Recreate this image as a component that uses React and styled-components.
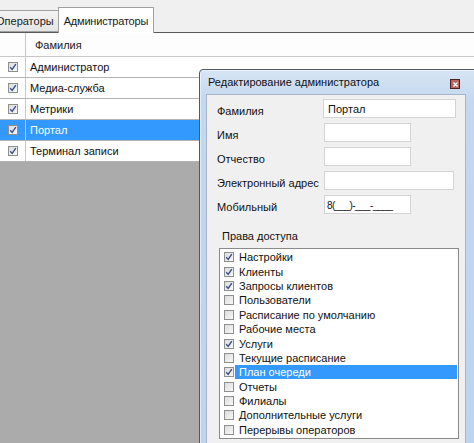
import React from 'react';
import styled, { createGlobalStyle } from 'styled-components';

const GlobalStyle = createGlobalStyle`
  html, body {
    margin: 0;
    padding: 0;
    background: #f0f0f0;
    overflow: hidden;
  }
  * { box-sizing: border-box; }
`;

const admins = [
  { name: 'Администратор' },
  { name: 'Медиа-служба' },
  { name: 'Метрики' },
  { name: 'Портал', selected: true },
  { name: 'Терминал записи' },
];

const rights = [
  { title: 'Настройки', checked: true },
  { title: 'Клиенты', checked: true },
  { title: 'Запросы клиентов', checked: true },
  { title: 'Пользователи' },
  { title: 'Расписание по умолчанию' },
  { title: 'Рабочие места' },
  { title: 'Услуги', checked: true },
  { title: 'Текущие расписание' },
  { title: 'План очереди', checked: true, selected: true },
  { title: 'Отчеты' },
  { title: 'Филиалы' },
  { title: 'Дополнительные услуги' },
  { title: 'Перерывы операторов' },
];

const fields = [
  { label: 'Фамилия', value: 'Портал', width: 134 },
  { label: 'Имя', value: '', width: 87 },
  { label: 'Отчество', value: '', width: 87 },
  { label: 'Электронный адрес', value: '', width: 130 },
  { label: 'Мобильный', value: '8(___)-___-____', width: 87, mask: true },
];

const CheckBox = ({ checked }) => (
  <Box>
    {checked && (
      <svg width="8" height="8" viewBox="0 0 8 8">
        <path d="M1.2 4.2 L3.2 6.4 L6.8 1.2" fill="none" stroke="#3b4f8a" strokeWidth="1.4" />
      </svg>
    )}
  </Box>
);

const App = () => {
  return (
    <Page>
      <GlobalStyle />
      <MainWindow>
        <TabStrip>
          <Tab>Операторы</Tab>
          <Tab active>Администраторы</Tab>
        </TabStrip>
        <Grid>
          <HeaderRow>
            <CheckCell />
            <HeaderText>Фамилия</HeaderText>
          </HeaderRow>
          {admins.map((item, index) => (
            <Row key={index} selected={item.selected}>
              <CheckCell>
                <CheckBox checked />
              </CheckCell>
              <RowText>{item.name}</RowText>
            </Row>
          ))}
          <EmptyArea />
        </Grid>
      </MainWindow>

      <Dialog>
        <TitleBar>
          <Title>Редактирование администратора</Title>
          <CloseButton>
            <svg width="5" height="5" viewBox="0 0 5 5">
              <path d="M0.5 0.5 L4.5 4.5 M4.5 0.5 L0.5 4.5" stroke="#fff" strokeWidth="1.2" />
            </svg>
          </CloseButton>
        </TitleBar>
        <Client>
          <Form>
            {fields.map((f, index) => (
              <FieldRow key={index}>
                <Label>{f.label}</Label>
                <TextInput w={f.width} mask={f.mask}>{f.value}</TextInput>
              </FieldRow>
            ))}
          </Form>
          <GroupLabel>Права доступа</GroupLabel>
          <ListBox>
            {rights.map((r, index) => (
              <ListItem key={index}>
                <CheckBox checked={r.checked} />
                <ItemText selected={r.selected}>{r.title}</ItemText>
              </ListItem>
            ))}
          </ListBox>
        </Client>
      </Dialog>
    </Page>
  );
};

const Page = styled.div`
  position: relative;
  width: 474px;
  height: 443px;
  overflow: hidden;
  font-family: "Liberation Sans", Arial, sans-serif;
  font-size: 11px;
  color: #000;
`;

const MainWindow = styled.div`
  display: flex;
  flex-direction: column;
  height: 100%;
`;

const TabStrip = styled.div`
  display: flex;
  align-items: flex-end;
  height: 33px;
  margin-left: -9px;
  background: #f0f0f0;
  border-bottom: 1px solid #5a5a5a;
`;

const Tab = styled.div`
  height: ${p => (p.active ? '26px' : '22px')};
  margin-bottom: ${p => (p.active ? '-1px' : '0')};
  padding: 0 ${p => (p.active ? '5px' : '4px')};
  display: flex;
  align-items: center;
  background: ${p => (p.active ? '#ffffff' : 'linear-gradient(#f4f4f4, #e4e4e4)')};
  border: 1px solid #a0a0a0;
  border-bottom: ${p => (p.active ? 'none' : '1px solid #a0a0a0')};
  margin-right: ${p => (p.active ? '0' : '-1px')};
  position: relative;
  z-index: ${p => (p.active ? 1 : 0)};
  color: #1a1a1a;
  letter-spacing: ${p => (p.active ? '-0.2px' : '0')};
`;

const Grid = styled.div`
  flex: 1;
  display: flex;
  flex-direction: column;
  background: #fff;
`;

const HeaderRow = styled.div`
  display: flex;
  height: 24px;
  background: #fdfdfd;
  border-bottom: 1px solid #c8c8c8;
`;

const CheckCell = styled.div`
  width: 26px;
  flex-shrink: 0;
  display: flex;
  align-items: center;
  justify-content: center;
  border-right: 1px solid #c8c8c8;
`;

const HeaderText = styled.div`
  display: flex;
  align-items: center;
  padding-left: 9px;
  color: #222;
`;

const Row = styled.div`
  display: flex;
  height: 21px;
  background: ${p => (p.selected ? '#3399ff' : '#fff')};
  color: ${p => (p.selected ? '#fff' : '#111')};
  border-bottom: 1px solid #b4b4b4;
`;

const RowText = styled.div`
  display: flex;
  align-items: center;
  padding-left: 4px;
`;

const EmptyArea = styled.div`
  flex: 1;
  background: #ababab;
`;

const Box = styled.div`
  width: 10px;
  height: 10px;
  flex-shrink: 0;
  border: 1px solid #8e8f8f;
  background: linear-gradient(135deg, #dcdcdc, #f8f8f8);
  display: flex;
  align-items: center;
  justify-content: center;
`;

const Dialog = styled.div`
  position: absolute;
  left: 199px;
  top: 69px;
  width: 282px;
  height: 400px;
  display: flex;
  flex-direction: column;
  background: linear-gradient(#d7e5f5, #c4d8ee 30px, #bcd4ef);
  border: 1px solid #4f5a66;
  border-radius: 4px 4px 0 0;
  padding: 0 14px 0 6px;
  box-shadow: 0 0 0 1px rgba(255, 255, 255, 0.5) inset;
`;

const TitleBar = styled.div`
  height: 24px;
  display: flex;
  align-items: center;
  justify-content: space-between;
  padding: 0 6px 0 2px;
`;

const Title = styled.div`
  font-size: 11px;
  color: #111;
`;

const CloseButton = styled.div`
  width: 10px;
  height: 10px;
  margin-top: 4px;
  border: 1px solid #4a2020;
  background: #b86560;
  display: flex;
  align-items: center;
  justify-content: center;
`;

const Client = styled.div`
  flex: 1;
  background: #f0f0f0;
  border: 1px solid #a6b6c8;
  padding: 4px 9px 0 10px;
  display: flex;
  flex-direction: column;
`;

const Form = styled.div`
  display: flex;
  flex-direction: column;
  gap: 5px;
`;

const FieldRow = styled.div`
  display: flex;
  align-items: center;
  height: 19px;
`;

const Label = styled.div`
  width: 107px;
  color: #111;
  margin-top: 4px;
  white-space: nowrap;
`;

const TextInput = styled.div`
  width: ${p => p.w}px;
  height: 19px;
  background: #fff;
  border: 1px solid #d4d4d4;
  padding: 1px ${p => (p.mask ? '2px' : '4px')} 0;
  display: flex;
  align-items: center;
  color: #111;
  white-space: nowrap;
  overflow: hidden;
  font-size: ${p => (p.mask ? '10px' : '11px')};
  letter-spacing: ${p => (p.mask ? '-0.6px' : '0')};
`;

const GroupLabel = styled.div`
  margin: 16px 0 0 5px;
  height: 13px;
  line-height: 13px;
  color: #111;
`;

const ListBox = styled.div`
  margin: 5px 0 0 2px;
  width: 240px;
  height: 191px;
  background: #fff;
  border: 1px solid #8a8a8a;
  padding: 1px 0 0 4px;
  display: flex;
  flex-direction: column;
`;

const ListItem = styled.div`
  display: flex;
  align-items: center;
  height: 14.4px;
`;

const ItemText = styled.div`
  flex: 1;
  height: 14px;
  line-height: 14px;
  margin-left: 1px;
  margin-right: 1px;
  padding-left: 4px;
  background: ${p => (p.selected ? '#3399ff' : 'transparent')};
  color: ${p => (p.selected ? '#fff' : '#111')};
`;

export default App;
